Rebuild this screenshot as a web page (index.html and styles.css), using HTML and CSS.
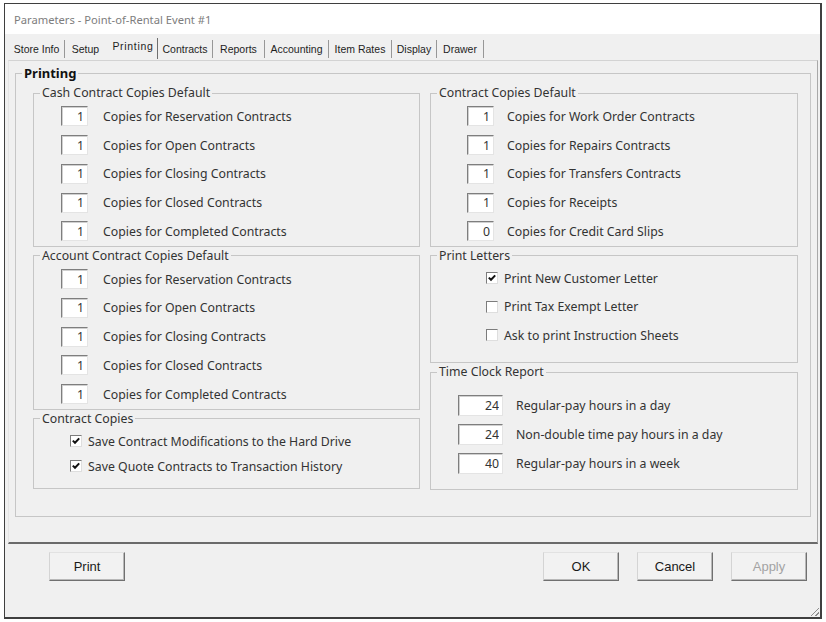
FILE: index.html
```html
<!DOCTYPE html>
<html lang="en">
<head>
    <meta charset="UTF-8">
    <title>Parameters - Point-of-Rental Event #1</title>
    <link rel="stylesheet" href="styles.css">
</head>
<body>
    <div class="window">
        <div class="title-bar">Parameters - Point-of-Rental Event #1</div>

        <!-- Tabs -->
        <div class="tab-strip">
            <span class="tab">Store Info</span>
            <span class="tab before-active">Setup</span>
            <span class="tab active">Printing</span>
            <span class="tab">Contracts</span>
            <span class="tab">Reports</span>
            <span class="tab">Accounting</span>
            <span class="tab">Item Rates</span>
            <span class="tab">Display</span>
            <span class="tab">Drawer</span>
        </div>

        <div class="tab-page">
            <fieldset class="group main-group">
                <legend>Printing</legend>
                <div class="columns">
                    <!-- Left column -->
                    <div class="column">
                        <fieldset class="group copies">
                            <legend>Cash Contract Copies Default</legend>
                            <div class="row"><input class="num" value="1" readonly><span>Copies for Reservation Contracts</span></div>
                            <div class="row"><input class="num" value="1" readonly><span>Copies for Open Contracts</span></div>
                            <div class="row"><input class="num" value="1" readonly><span>Copies for Closing Contracts</span></div>
                            <div class="row"><input class="num" value="1" readonly><span>Copies for Closed Contracts</span></div>
                            <div class="row"><input class="num" value="1" readonly><span>Copies for Completed Contracts</span></div>
                        </fieldset>

                        <fieldset class="group copies">
                            <legend>Account Contract Copies Default</legend>
                            <div class="row"><input class="num" value="1" readonly><span>Copies for Reservation Contracts</span></div>
                            <div class="row"><input class="num" value="1" readonly><span>Copies for Open Contracts</span></div>
                            <div class="row"><input class="num" value="1" readonly><span>Copies for Closing Contracts</span></div>
                            <div class="row"><input class="num" value="1" readonly><span>Copies for Closed Contracts</span></div>
                            <div class="row"><input class="num" value="1" readonly><span>Copies for Completed Contracts</span></div>
                        </fieldset>

                        <fieldset class="group checks">
                            <legend>Contract Copies</legend>
                            <div class="row">
                                <span class="check on"><svg width="8" height="8" viewBox="0 0 8 8"><path d="M0.8 3.6 L3 5.8 L7.2 1.4" /></svg></span>
                                <span>Save Contract Modifications to the Hard Drive</span>
                            </div>
                            <div class="row">
                                <span class="check on"><svg width="8" height="8" viewBox="0 0 8 8"><path d="M0.8 3.6 L3 5.8 L7.2 1.4" /></svg></span>
                                <span>Save Quote Contracts to Transaction History</span>
                            </div>
                        </fieldset>
                    </div>

                    <!-- Right column -->
                    <div class="column">
                        <fieldset class="group copies right">
                            <legend>Contract Copies Default</legend>
                            <div class="row"><input class="num" value="1" readonly><span>Copies for Work Order Contracts</span></div>
                            <div class="row"><input class="num" value="1" readonly><span>Copies for Repairs Contracts</span></div>
                            <div class="row"><input class="num" value="1" readonly><span>Copies for Transfers Contracts</span></div>
                            <div class="row"><input class="num" value="1" readonly><span>Copies for Receipts</span></div>
                            <div class="row"><input class="num" value="0" readonly><span>Copies for Credit Card Slips</span></div>
                        </fieldset>

                        <fieldset class="group letters">
                            <legend>Print Letters</legend>
                            <div class="row">
                                <span class="check on"><svg width="8" height="8" viewBox="0 0 8 8"><path d="M0.8 3.6 L3 5.8 L7.2 1.4" /></svg></span>
                                <span>Print New Customer Letter</span>
                            </div>
                            <div class="row">
                                <span class="check"></span>
                                <span>Print Tax Exempt Letter</span>
                            </div>
                            <div class="row">
                                <span class="check"></span>
                                <span>Ask to print Instruction Sheets</span>
                            </div>
                        </fieldset>

                        <fieldset class="group time-clock">
                            <legend>Time Clock Report</legend>
                            <div class="row"><input class="num wide" value="24" readonly><span>Regular-pay hours in a day</span></div>
                            <div class="row"><input class="num wide" value="24" readonly><span>Non-double time pay hours in a day</span></div>
                            <div class="row"><input class="num wide" value="40" readonly><span>Regular-pay hours in a week</span></div>
                        </fieldset>
                    </div>
                </div>
            </fieldset>
        </div>

        <div class="button-bar">
            <button class="btn">Print</button>
            <button class="btn push">OK</button>
            <button class="btn">Cancel</button>
            <button class="btn" disabled>Apply</button>
        </div>

        <div class="size-grip"></div>
    </div>
</body>
</html>
```

FILE: styles.css
```css
* {
    box-sizing: border-box;
}

body {
    margin: 0;
    background: #fff;
    font-family: "Noto Sans", sans-serif;
    font-size: 12.3px;
    color: #333;
}

/* Dialog frame */
.window {
    position: relative;
    margin: 3px 0 0 4px;
    width: 818px;
    height: 616px;
    border: 1px solid #3f3f3f;
    border-right-width: 2px;
    border-bottom-width: 2px;
    background: #f0f0f0;
    display: flex;
    flex-direction: column;
}

.title-bar {
    height: 30px;
    flex: none;
    background: #fff;
    padding-left: 9px;
    display: flex;
    align-items: center;
    font-size: 11.2px;
    color: #7d7d7d;
}

/* Tabs */
.tab-strip {
    display: flex;
    align-items: flex-end;
    height: 22px;
    flex: none;
    margin: 4px 0 0 4px;
    font-family: "Liberation Sans", Arial, sans-serif;
    font-size: 10.5px;
    color: #1e1e1e;
}

.tab {
    height: 18px;
    line-height: 18px;
    margin-bottom: 2px;
    text-align: center;
    white-space: nowrap;
    border-right: 1px solid #979797;
}

/* tab widths follow the labels as the dialog draws them */
.tab:nth-child(1) { width: 56px; }
.tab:nth-child(2) { width: 42px; }
.tab:nth-child(3) { width: 51px; }
.tab:nth-child(4) { width: 55px; }
.tab:nth-child(5) { width: 52px; }
.tab:nth-child(6) { width: 64px; }
.tab:nth-child(7) { width: 63px; }
.tab:nth-child(8) { width: 45px; }
.tab:nth-child(9) { width: 47px; }

.tab.before-active {
    border-right-color: transparent;
}

.tab.active {
    height: 21px;
    line-height: 16px;
    margin-bottom: 1px;
    padding-left: 2px;
    letter-spacing: 0.7px;
    border-right-color: #6f6f6f;
}

.tab-page {
    height: 484px;
    flex: none;
    margin: 0 2px 0 3px;
    border-top: 1px solid #d3d3d3;
    border-left: 1px solid #e4e4e4;
    border-right: 1px solid #a8a8a8;
    border-bottom: 2px solid #6a6a6a;
    padding: 4px 6px 0 6px;
}

/* Group boxes */
.group {
    margin: 0;
    padding: 0;
    min-width: 0;
    border: 1px solid #c6c6c6;
}

.group legend {
    margin-left: 6px;
    padding: 0 2px;
    line-height: 16px;
}

.main-group {
    padding-bottom: 26px;
}

.main-group > legend {
    font-weight: bold;
    font-size: 13px;
    color: #111;
}

.columns {
    display: grid;
    grid-template-columns: 387px 368px;
    column-gap: 10px;
    padding: 4px 11px 0 17px;
}

.column {
    display: flex;
    flex-direction: column;
    gap: 1px;
}

.row {
    display: flex;
    align-items: center;
}

/* Copy count groups */
.copies {
    padding-top: 1px;
}

.copies .row {
    height: 28.75px;
    padding-left: 27px;
    gap: 15px;
}

.copies.right .row {
    padding-left: 36px;
    gap: 13px;
}

.checks {
    padding: 2px 0 9px;
}

.checks .row {
    height: 25px;
    padding-left: 36px;
    gap: 6px;
}

.letters {
    padding: 0 0 13px;
}

.letters .row {
    height: 28.5px;
    padding-left: 55px;
    gap: 6px;
}

.time-clock {
    padding: 11px 0 10.5px;
}

.time-clock .row {
    height: 29px;
    padding-left: 27px;
    gap: 13px;
}

/* Sunken edit boxes */
.num {
    width: 27px;
    height: 20px;
    flex: none;
    margin: 0;
    padding: 0 3px 0 0;
    border: 1px solid;
    border-color: #7e7e7e #e4e4e4 #e4e4e4 #7e7e7e;
    box-shadow: inset 1px 1px 0 #d0d0d0;
    background: #fff;
    font: inherit;
    color: #333;
    text-align: right;
    outline: none;
}

.num.wide {
    width: 45px;
    height: 21px;
}

/* Check boxes */
.check {
    width: 12px;
    height: 12px;
    flex: none;
    border: 1px solid;
    border-color: #7c7c7c #dedede #dedede #7c7c7c;
    background: #fff;
    display: flex;
    align-items: center;
    justify-content: center;
}

.check svg path {
    fill: none;
    stroke: #111;
    stroke-width: 2;
}

/* Bottom buttons */
.button-bar {
    display: flex;
    gap: 18px;
    padding: 8px 13px 0 44px;
}

.btn {
    width: 76px;
    height: 29px;
    padding: 0;
    font-family: "Liberation Sans", Arial, sans-serif;
    font-size: 13px;
    color: #1a1a1a;
    background: #f2f2f2;
    border: 1px solid;
    border-color: #e2e2e2 #707070 #707070 #d4d4d4;
    box-shadow: inset -1px -1px 0 #b8b8b8;
}

.btn.push {
    margin-left: auto;
}

.btn:disabled {
    color: #a3a3a3;
}

.size-grip {
    position: absolute;
    right: 1px;
    bottom: 1px;
    width: 11px;
    height: 11px;
    background: repeating-linear-gradient(-45deg, transparent 0 2px, #8e8e8e 2px 3px);
    clip-path: polygon(100% 0, 100% 100%, 0 100%);
}
```
